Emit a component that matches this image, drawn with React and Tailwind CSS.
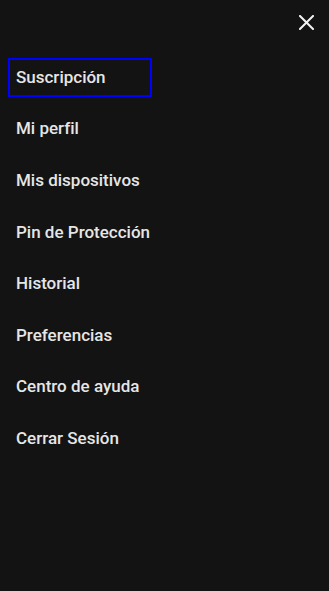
import React from "react";

const items = [
  "Suscripción",
  "Mi perfil",
  "Mis dispositivos",
  "Pin de Protección",
  "Historial",
  "Preferencias",
  "Centro de ayuda",
  "Cerrar Sesión",
];

export default function App() {
  return (
    <div
      className="min-h-[591px] w-full bg-[#131313] text-[#e6e6e6]"
      style={{ fontFamily: "Roboto, 'Liberation Sans', sans-serif" }}
    >
      <div className="flex justify-end pt-[15px] pr-[15px]">
        <button className="flex h-[15px] w-[15px] items-center justify-center">
          <svg width="15" height="15" viewBox="0 0 15 15" fill="none">
            <path d="M1 1L14 14M14 1L1 14" stroke="#f2f2f2" strokeWidth="2" strokeLinecap="square" />
          </svg>
        </button>
      </div>
      <nav className="mt-[28px] flex flex-col gap-[12.6px] px-2">
        {items.map((item, i) => (
          <a
            key={item}
            href="#"
            className={
              "flex h-[39px] w-[144px] items-center whitespace-nowrap px-2 text-[17px] font-medium [font-variant-ligatures:none] " +
              (i === 0 ? "border-2 border-[#0000ff] px-[6px]" : "")
            }
          >
            {item}
          </a>
        ))}
      </nav>
    </div>
  );
}
